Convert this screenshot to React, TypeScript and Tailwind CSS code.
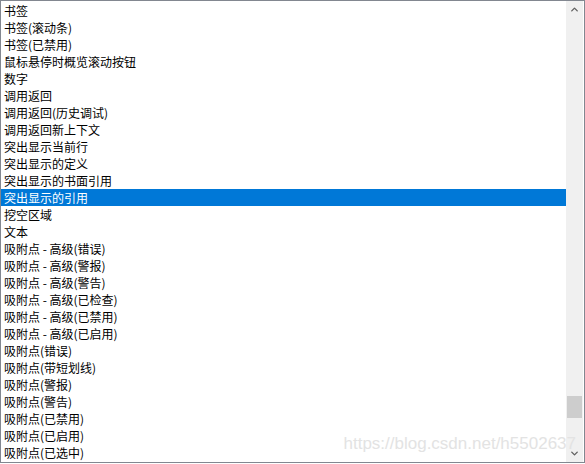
import { ChevronUp, ChevronDown } from "lucide-react";

const items = [
  "书签",
  "书签(滚动条)",
  "书签(已禁用)",
  "鼠标悬停时概览滚动按钮",
  "数字",
  "调用返回",
  "调用返回(历史调试)",
  "调用返回新上下文",
  "突出显示当前行",
  "突出显示的定义",
  "突出显示的书面引用",
  "突出显示的引用",
  "挖空区域",
  "文本",
  "吸附点 - 高级(错误)",
  "吸附点 - 高级(警报)",
  "吸附点 - 高级(警告)",
  "吸附点 - 高级(已检查)",
  "吸附点 - 高级(已禁用)",
  "吸附点 - 高级(已启用)",
  "吸附点(错误)",
  "吸附点(带短划线)",
  "吸附点(警报)",
  "吸附点(警告)",
  "吸附点(已禁用)",
  "吸附点(已启用)",
  "吸附点(已选中)",
];

const selected = "突出显示的引用";

export default function App() {
  return (
    <div className="w-[585px] h-[464px] bg-white">
      <div className="relative w-[585px] h-[463px] border border-[#828790] bg-white flex overflow-hidden font-['Microsoft_YaHei','Noto_Sans_CJK_SC',sans-serif] text-[12px] text-black">
        {/* List */}
        <div className="flex-1 flex flex-col pt-px overflow-hidden">
          {items.map((item) => (
            <div
              key={item}
              className={`h-[17px] leading-[17px] pl-[3px] whitespace-nowrap shrink-0 ${
                item === selected ? "bg-[#0078d7] text-white" : ""
              }`}
            >
              {item}
            </div>
          ))}
        </div>

        {/* Scrollbar */}
        <div className="w-[17px] mr-px bg-[#f0f0f0] flex flex-col items-center">
          <div className="h-[17px] w-full flex items-center justify-center text-[#606060]">
            <ChevronUp size={11} strokeWidth={3} />
          </div>
          <div className="flex-1 w-full flex flex-col pt-[378px]">
            <div className="h-[22px] mx-px bg-[#cdcdcd]" />
          </div>
          <div className="h-[17px] w-full flex items-center justify-center text-[#606060]">
            <ChevronDown size={11} strokeWidth={3} />
          </div>
        </div>

        {/* Watermark */}
        <span className="absolute right-[8px] bottom-[10px] text-[17px] leading-none text-[#e3e3e3] font-['Liberation_Sans',sans-serif] pointer-events-none">
          https://blog.csdn.net/h5502637
        </span>
      </div>
    </div>
  );
}
